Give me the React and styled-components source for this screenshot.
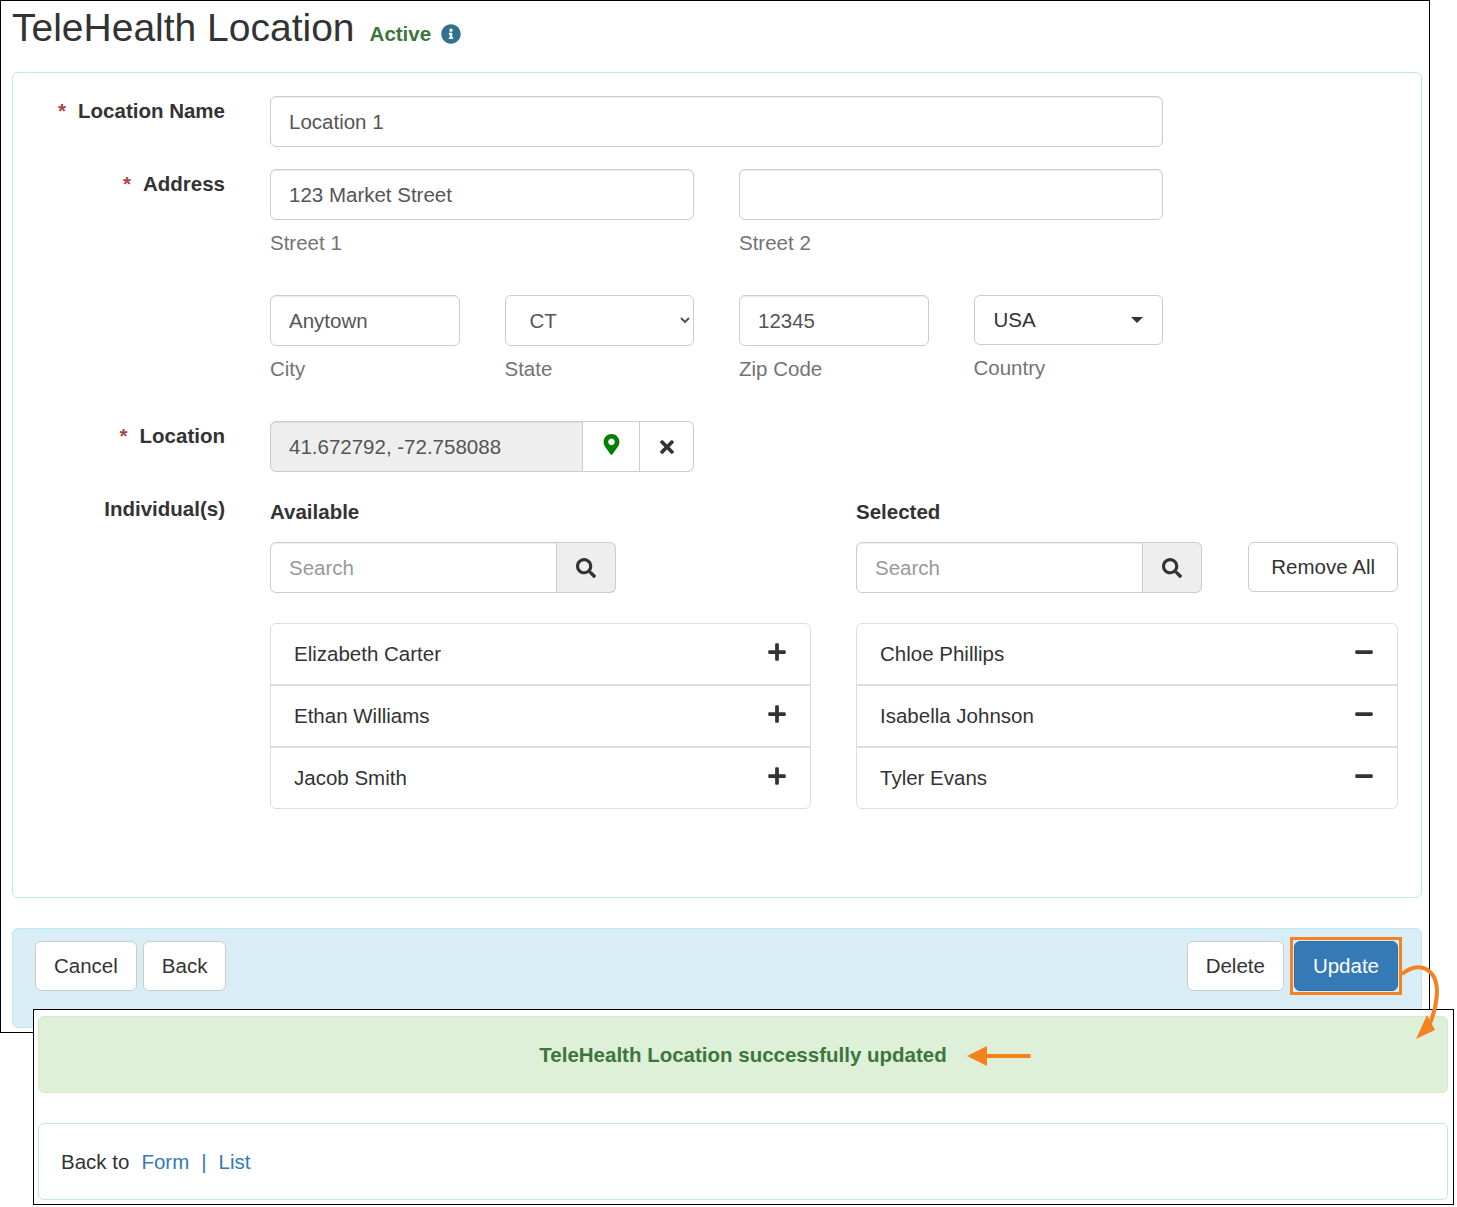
import styled, { createGlobalStyle } from "styled-components";
import { FaInfoCircle, FaMapMarkerAlt, FaMinus, FaPlus, FaSearch, FaTimes } from "react-icons/fa";

const GlobalStyle = createGlobalStyle`
  * { box-sizing: border-box; }
  html, body { margin: 0; background: #fff; }
  body {
    font-family: "Liberation Sans", Arial, sans-serif;
    font-size: 20.5px;
    color: #333;
  }
`;

const Page = styled.div`
  position: relative;
  width: 1457px;
  height: 1207px;
  overflow: hidden;
`;

const FormWindow = styled.div`
  width: 1430px;
  height: 1033px;
  border: 1px solid #000;
  padding: 0 7px 0 11px;
`;

const TitleRow = styled.div`
  display: flex;
  align-items: baseline;
  height: 71px;
  padding-top: 4px;
`;

const Title = styled.h1`
  margin: 0;
  font-size: 39px;
  font-weight: 400;
  line-height: 46px;
`;

const Status = styled.span`
  display: inline-flex;
  align-items: center;
  margin-left: 15px;
  color: #3c763d;
  font-weight: 700;
  svg { margin-left: 10px; color: #31708f; font-size: 20px; }
`;

const FormPanel = styled.div`
  height: 826px;
  border: 1px solid #bce8f1;
  border-radius: 6px;
  padding: 23px 23px 0 0;
`;

const FormRow = styled.div`
  display: flex;
  margin-bottom: ${({ $gap }) => $gap ?? 22}px;
`;

const Label = styled.div`
  width: 212px;
  flex: none;
  text-align: right;
  font-weight: 700;
  line-height: 30px;
  white-space: nowrap;
  padding-top: ${({ $top }) => $top ?? 0}px;
  margin-right: 45px;
`;

const Star = styled.span`
  color: #a94442;
  margin-right: 12px;
`;

const Fields = styled.div`
  width: ${({ $width }) => $width ?? 893}px;
  flex: none;
`;

const FieldGrid = styled.div`
  display: grid;
  grid-template-columns: repeat(${({ $cols }) => $cols}, 1fr);
  column-gap: 45px;
`;

const Input = styled.input`
  display: block;
  width: 100%;
  height: 51px;
  padding: 0 18px;
  border: 1px solid #ccc;
  border-radius: 6px;
  background: ${({ readOnly }) => (readOnly ? "#eee" : "#fff")};
  box-shadow: inset 0 1px 1px rgba(0, 0, 0, 0.075);
  font: inherit;
  color: #555;
  &::placeholder { color: #999; opacity: 1; }
`;

const Select = styled.select`
  display: block;
  width: 100%;
  height: 51px;
  padding: 0 20px;
  border: 1px solid #ccc;
  border-radius: 6px;
  background: #fff;
  font: inherit;
  color: #555;
`;

const Dropdown = styled.div`
  display: flex;
  align-items: center;
  justify-content: space-between;
  height: 50px;
  padding: 0 19px;
  border: 1px solid #ccc;
  border-radius: 6px;
  &::after {
    content: "";
    border-top: 6px solid #333;
    border-left: 6px solid transparent;
    border-right: 6px solid transparent;
  }
`;

const Help = styled.div`
  color: #737373;
  line-height: 30px;
  margin-top: 8px;
`;

const Group = styled.div`
  display: flex;
  width: ${({ $width }) => $width}px;
  flex: none;
  height: 51px;
  ${Input} {
    flex: 1;
    min-width: 0;
    border-radius: 6px 0 0 6px;
  }
`;

const Addon = styled.div`
  display: flex;
  align-items: center;
  justify-content: center;
  flex: none;
  width: ${({ $width }) => $width}px;
  border: 1px solid #ccc;
  border-left: 0;
  background: ${({ $muted }) => ($muted ? "#eee" : "#fff")};
  color: ${({ $color }) => $color ?? "#333"};
  font-size: ${({ $size }) => $size ?? 20}px;
  &:last-child { border-radius: 0 6px 6px 0; }
  svg { transform: translateY(${({ $lift }) => $lift ?? 0}px); }
`;

const Columns = styled.div`
  display: grid;
  grid-template-columns: 541px 542px;
  column-gap: 45px;
  padding-top: 3px;
`;

const ColumnTitle = styled.div`
  font-weight: 700;
  line-height: 30px;
  margin-bottom: 15px;
`;

const SearchRow = styled.div`
  display: flex;
  justify-content: space-between;
  margin-bottom: 30px;
`;

const Button = styled.button`
  height: 50px;
  padding: 0 ${({ $pad }) => $pad ?? 18}px;
  border: 1px solid ${({ $primary }) => ($primary ? "#2e6da4" : "#ccc")};
  border-radius: 6px;
  background: ${({ $primary }) => ($primary ? "#337ab7" : "#fff")};
  color: ${({ $primary }) => ($primary ? "#fff" : "#333")};
  font: inherit;
`;

const List = styled.div`
  border: 1px solid #ddd;
  border-radius: 6px;
`;

const ListItem = styled.div`
  display: flex;
  justify-content: space-between;
  align-items: center;
  height: ${({ $last }) => ($last ? 60 : 62)}px;
  padding: 0 23px;
  border-bottom: ${({ $last }) => ($last ? "0" : "2px solid #ddd")};
  svg { font-size: 20px; color: #333; transform: translateY(-2px); }
`;

const ActionBar = styled.div`
  display: flex;
  justify-content: space-between;
  align-items: center;
  height: 100px;
  margin-top: 30px;
  padding: 0 23px 24px 22px;
  border: 1px solid #bce8f1;
  border-radius: 6px;
  background: #d9edf7;
`;

const ButtonSet = styled.div`
  display: flex;
  gap: 6px;
`;

const Highlight = styled.div`
  display: flex;
  margin: -4px -4px -4px 0;
  padding: 1px 1px 1px 1px;
  border: 3px solid #f58220;
`;

const ResultWindow = styled.div`
  position: relative;
  width: 1421px;
  height: 196px;
  margin: -24px 0 0 33px;
  padding: 6px 5px 0 4px;
  border: 1px solid #000;
  background: #fff;
`;

const Alert = styled.div`
  display: flex;
  align-items: center;
  justify-content: center;
  height: 77px;
  border: 1px solid #d6e9c6;
  border-radius: 6px;
  background: #dff0d8;
  color: #3c763d;
  font-weight: 700;
`;

const BackPanel = styled.div`
  display: flex;
  align-items: center;
  height: 77px;
  margin-top: 30px;
  padding-left: 22px;
  border: 1px solid #bce8f1;
  border-radius: 6px;
`;

const LinkText = styled.a`
  color: #337ab7;
  margin-left: ${({ $gap }) => $gap ?? 0}px;
`;

const Callout = styled.svg`
  position: absolute;
  left: ${({ $x }) => $x}px;
  top: ${({ $y }) => $y}px;
  pointer-events: none;
`;

const available = ["Elizabeth Carter", "Ethan Williams", "Jacob Smith"];
const selected = ["Chloe Phillips", "Isabella Johnson", "Tyler Evans"];

function App() {
  return (
    <Page>
      <GlobalStyle />
      <FormWindow>
        <TitleRow>
          <Title>TeleHealth Location</Title>
          <Status>Active <FaInfoCircle /></Status>
        </TitleRow>
        <FormPanel>
          <FormRow>
            <Label $top={0}><Star>*</Star>Location Name</Label>
            <Fields><Input defaultValue="Location 1" /></Fields>
          </FormRow>
          <FormRow $gap={37}>
            <Label><Star>*</Star>Address</Label>
            <Fields>
              <FieldGrid $cols={2}>
                <div><Input defaultValue="123 Market Street" /><Help>Street 1</Help></div>
                <div><Input /><Help>Street 2</Help></div>
              </FieldGrid>
            </Fields>
          </FormRow>
          <FormRow $gap={37}>
            <Label />
            <Fields>
              <FieldGrid $cols={4}>
                <div><Input defaultValue="Anytown" /><Help>City</Help></div>
                <div>
                  <Select defaultValue="CT"><option value="CT">CT</option></Select>
                  <Help>State</Help>
                </div>
                <div><Input defaultValue="12345" /><Help>Zip Code</Help></div>
                <div><Dropdown>USA</Dropdown><Help>Country</Help></div>
              </FieldGrid>
            </Fields>
          </FormRow>
          <FormRow>
            <Label><Star>*</Star>Location</Label>
            <Group $width={424}>
              <Input readOnly value="41.672792, -72.758088" />
              <Addon $width={57} $color="#008000" $size={21} $lift={-2}><FaMapMarkerAlt /></Addon>
              <Addon $width={54}><FaTimes /></Addon>
            </Group>
          </FormRow>
          <FormRow $gap={0}>
            <Label>Individual(s)</Label>
            <Fields $width={1128}>
              <Columns>
                <div>
                  <ColumnTitle>Available</ColumnTitle>
                  <SearchRow>
                    <Group $width={346}>
                      <Input placeholder="Search" />
                      <Addon $width={59} $muted><FaSearch /></Addon>
                    </Group>
                  </SearchRow>
                  <List>
                    {available.map((name, i) => (
                      <ListItem key={name} $last={i === available.length - 1}>{name}<FaPlus /></ListItem>
                    ))}
                  </List>
                </div>
                <div>
                  <ColumnTitle>Selected</ColumnTitle>
                  <SearchRow>
                    <Group $width={346}>
                      <Input placeholder="Search" />
                      <Addon $width={59} $muted><FaSearch /></Addon>
                    </Group>
                    <Button $pad={22}>Remove All</Button>
                  </SearchRow>
                  <List>
                    {selected.map((name, i) => (
                      <ListItem key={name} $last={i === selected.length - 1}>{name}<FaMinus /></ListItem>
                    ))}
                  </List>
                </div>
              </Columns>
            </Fields>
          </FormRow>
        </FormPanel>
        <ActionBar>
          <ButtonSet>
            <Button>Cancel</Button>
            <Button>Back</Button>
          </ButtonSet>
          <ButtonSet>
            <Button>Delete</Button>
            <Highlight><Button $primary>Update</Button></Highlight>
          </ButtonSet>
        </ActionBar>
      </FormWindow>
      <ResultWindow>
        <Alert>TeleHealth Location successfully updated</Alert>
        <BackPanel>
          Back to
          <LinkText $gap={12}>Form</LinkText>
          <LinkText $gap={12}>|</LinkText>
          <LinkText $gap={12}>List</LinkText>
        </BackPanel>
      </ResultWindow>
      <Callout $x={1400} $y={960} width="50" height="85" viewBox="0 0 50 85">
        <path d="M2 14 C12 6 24 4 32 14 C40 24 38 46 28 68" fill="none" stroke="#f58220" strokeWidth="4" />
        <polygon points="16,79 35,70 27,55" fill="#f58220" />
      </Callout>
      <Callout $x={960} $y={1040} width="75" height="32" viewBox="0 0 75 32">
        <line x1="22" y1="16" x2="69" y2="16" stroke="#f58220" strokeWidth="4" strokeLinecap="round" />
        <polygon points="7,16 27,6 27,26" fill="#f58220" />
      </Callout>
    </Page>
  );
}

export default App;
